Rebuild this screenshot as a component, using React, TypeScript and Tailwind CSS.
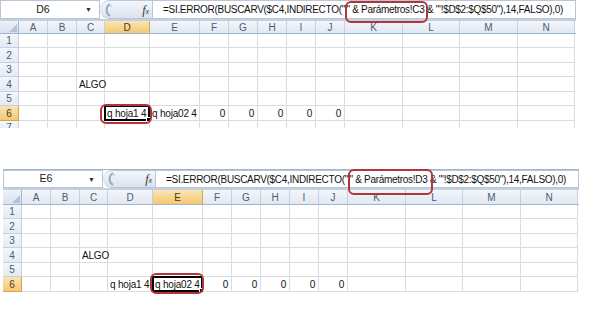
import React from 'react';

const cols = [
  { id: 'A', w: 'w-[29px]' },
  { id: 'B', w: 'w-[29px]' },
  { id: 'C', w: 'w-[28px]' },
  { id: 'D', w: 'w-[45px]' },
  { id: 'E', w: 'w-[50px]' },
  { id: 'F', w: 'w-[29px]' },
  { id: 'G', w: 'w-[29px]' },
  { id: 'H', w: 'w-[29px]' },
  { id: 'I', w: 'w-[29px]' },
  { id: 'J', w: 'w-[29px]' },
  { id: 'K', w: 'w-[58px]' },
  { id: 'L', w: 'w-[57px]' },
  { id: 'M', w: 'w-[58px]' },
  { id: 'N', w: 'w-[57px]' },
];

const rowHeights = ['h-[14px]', 'h-[15px]', 'h-[14px]', 'h-[15px]', 'h-[14px]', 'h-[15px]', 'h-[14px]'];

const data: Record<string, { text: string; right?: boolean }> = {
  C4: { text: 'ALGO' },
  D6: { text: 'q hoja1 4' },
  E6: { text: 'q hoja02 4' },
  F6: { text: '0', right: true },
  G6: { text: '0', right: true },
  H6: { text: '0', right: true },
  I6: { text: '0', right: true },
  J6: { text: '0', right: true },
};

function FormulaBar({ cell, param, barH }: { cell: string; param: string; barH: string }) {
  return (
    <div className={`flex ${barH} bg-white`}>
      <div className="w-[100px] flex items-center border border-[#b8c6d8] bg-white">
        <span className="w-[84px] text-center text-[#222] text-[10.5px]">{cell}</span>
        <span className="text-[7px] text-[#333] leading-none">▼</span>
      </div>
      <div className="w-[52px] flex items-center justify-between bg-gradient-to-b from-[#f4f7fb] to-[#dbe3ee] border-y border-[#b8c6d8] rounded-l-full">
        <svg width="14" height="16" viewBox="0 0 14 16" className="ml-[2px]">
          <path d="M8 2 A7 7 0 0 0 8 14" fill="none" stroke="#9aa9bc" strokeWidth="2" />
          <circle cx="9" cy="4" r="1" fill="#c6d1de" />
        </svg>
        <span className="mr-[3px] text-[#333] leading-none">
          <span className="italic font-['Liberation_Serif',serif] text-[12px]">f</span>
          <span className="italic text-[7px]">x</span>
        </span>
      </div>
      <div className="flex-1 flex items-center border border-[#b8c6d8] pl-[10px] text-[#111] text-[10px] tracking-[-0.3px] whitespace-nowrap overflow-hidden">
        =SI.ERROR(BUSCARV($C4,INDIRECTO("'" &amp; Parámetros!{param} &amp; "'!$D$2:$Q$50"),14,FALSO),0)
      </div>
    </div>
  );
}

function Sheet({ cell, selCol, param, barH, hdrH, rows, extraTop }: {
  cell: string; selCol: string; param: string; barH: string; hdrH: string; rows: number; extraTop?: boolean;
}) {
  return (
    <div className="w-[576px] overflow-hidden">
      {extraTop && <div className="h-px bg-[#a3b5cc]" />}
      <FormulaBar cell={cell} param={param} barH={barH} />
      <div className="h-[2px] bg-[#c4d0df]" />
      <div className={`flex ${hdrH} border-b border-[#9eb6ce]`}>
        <div className="w-[19px] bg-gradient-to-b from-[#eef3f9] to-[#d7e1ee] border-r border-[#9eb6ce] flex items-end justify-end">
          <svg width="10" height="10" viewBox="0 0 10 10"><path d="M9 1 L9 9 L1 9 Z" fill="#b3c3d6" /></svg>
        </div>
        {cols.map((c) => (
          <div
            key={c.id}
            className={`${c.w} shrink-0 flex items-center justify-center border-r ${
              c.id === selCol
                ? 'bg-gradient-to-b from-[#fbe4b6] to-[#f4c86f] border-[#d7a74f] text-[#4a3a1a]'
                : 'bg-gradient-to-b from-[#f3f6fb] to-[#e0e8f2] border-[#c5d1e0] text-[#4a5d74]'
            }`}
          >
            {c.id}
          </div>
        ))}
      </div>
      {Array.from({ length: rows }).map((_, i) => {
        const r = i + 1;
        return (
          <div key={r} className={`flex ${rowHeights[i]}`}>
            <div
              className={`w-[19px] shrink-0 flex items-center justify-center border-r border-b ${
                r === 6
                  ? 'bg-gradient-to-b from-[#fbe4b6] to-[#f4c86f] border-[#d7a74f] text-[#4a3a1a]'
                  : 'bg-gradient-to-b from-[#f3f6fb] to-[#e4ebf4] border-[#c5d1e0] text-[#4a5d74]'
              }`}
            >
              {r}
            </div>
            {cols.map((c) => {
              const key = `${c.id}${r}`;
              const d = data[key];
              const sel = key === `${selCol}6`;
              return (
                <div
                  key={key}
                  className={`${c.w} shrink-0 relative border-r border-b border-[#dadcdd] flex items-center whitespace-nowrap text-[#111] text-[10px] tracking-[-0.2px] ${
                    d?.right ? 'justify-end pr-[3px]' : 'pl-[2px]'
                  }`}
                >
                  {d?.text}
                  {sel && (
                    <div className="absolute -left-px -top-px -right-px -bottom-px border-2 border-black">
                      <div className="absolute -right-[3px] -bottom-[3px] w-[5px] h-[5px] bg-black border border-white" />
                    </div>
                  )}
                </div>
              );
            })}
          </div>
        );
      })}
    </div>
  );
}

export default function App() {
  return (
    <div className="relative w-[600px] h-[310px] bg-white font-['Liberation_Sans',sans-serif] text-[10px] overflow-hidden">
      <div className="h-[128px] overflow-hidden">
        <Sheet cell="D6" selCol="D" param="C3" barH="h-[19px]" hdrH="h-[13px]" rows={7} />
      </div>
      <div className="mt-[41px] ml-[3px]">
        <Sheet cell="E6" selCol="E" param="D3" barH="h-[18px]" hdrH="h-[15px]" rows={6} extraTop />
      </div>

      {/* red marks */}
      <div className="absolute left-[345px] top-[1px] w-[83px] h-[22px] border-2 border-[#b3343a] rounded-[6px]" />
      <div className="absolute left-[100px] top-[104px] w-[52px] h-[20px] border-2 border-[#b3343a] rounded-[6px]" />
      <div className="absolute left-[348px] top-[169px] w-[85px] h-[26px] border-2 border-[#b3343a] rounded-[6px]" />
      <div className="absolute left-[150px] top-[273px] w-[54px] h-[21px] border-2 border-[#b3343a] rounded-[6px]" />
    </div>
  );
}
